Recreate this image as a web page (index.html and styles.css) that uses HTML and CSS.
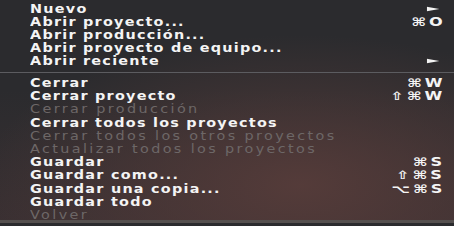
FILE: index.html
```html
<!DOCTYPE html>
<html lang="es">
<head>
    <meta charset="UTF-8">
    <title>Archivo</title>
    <link rel="stylesheet" href="styles.css">
</head>
<body>
    <div class="menu">
        <div class="group">
            <div class="item"><span class="label">Nuevo</span><span class="key"><svg class="arrow" viewBox="0 0 12 6"><polygon points="0,0 12,3 0,6"/></svg></span></div>
            <div class="item"><span class="label">Abrir proyecto...</span><span class="key">⌘O</span></div>
            <div class="item"><span class="label">Abrir producción...</span></div>
            <div class="item"><span class="label">Abrir proyecto de equipo...</span></div>
            <div class="item"><span class="label">Abrir reciente</span><span class="key"><svg class="arrow" viewBox="0 0 12 6"><polygon points="0,0 12,3 0,6"/></svg></span></div>
        </div>
        <div class="sep"></div>
        <div class="group">
            <div class="item"><span class="label">Cerrar</span><span class="key">⌘W</span></div>
            <div class="item"><span class="label">Cerrar proyecto</span><span class="key">⇧⌘W</span></div>
            <div class="item off"><span class="label">Cerrar producción</span></div>
            <div class="item"><span class="label">Cerrar todos los proyectos</span></div>
            <div class="item off"><span class="label">Cerrar todos los otros proyectos</span></div>
            <div class="item off"><span class="label">Actualizar todos los proyectos</span></div>
            <div class="item"><span class="label">Guardar</span><span class="key">⌘S</span></div>
            <div class="item"><span class="label">Guardar como...</span><span class="key">⇧⌘S</span></div>
            <div class="item"><span class="label">Guardar una copia...</span><span class="key">⌥⌘S</span></div>
            <div class="item"><span class="label">Guardar todo</span></div>
            <div class="item off"><span class="label">Volver</span></div>
        </div>
    </div>
</body>
</html>
```

FILE: styles.css
```css
/* Menu */
body {
    margin: 0;
    width: 454px;
    height: 226px;
    overflow: hidden;
    font-family: "DejaVu Sans", sans-serif;
    background-color: #2b2b2e;
}

.menu {
    height: 223px;
    padding-top: 2px;
    box-sizing: border-box;
    border-bottom: 3px solid #55504f;
    background:
        radial-gradient(ellipse 320px 150px at 300px 185px, rgba(86, 60, 58, 0.95), rgba(86, 60, 58, 0) 100%),
        linear-gradient(#2b2b2e 0, #2b2b2e 90px, #3a3032 226px);
}

.item {
    display: flex;
    justify-content: space-between;
    align-items: center;
    height: 13.2px;
    padding: 0 9px 0 30px;
    font-size: 11.5px;
    font-weight: bold;
    letter-spacing: 1px;
    color: #f4f4f4;
    white-space: nowrap;
}

/* source text is stretched wide */
.label {
    display: inline-block;
    transform: scaleX(1.25);
    transform-origin: left center;
}

.item.off {
    color: #6d6767;
    font-weight: normal;
    letter-spacing: 1.9px;
}

.key {
    display: flex;
    align-items: center;
    letter-spacing: 2px;
    transform: scaleX(1.4);
    transform-origin: right center;
}

.arrow {
    width: 9px;
    height: 6px;
    margin-right: 4px;
    fill: #f4f4f4;
}

.sep {
    height: 1px;
    margin: 4px 0 3.5px;
    background-color: #5c5c60;
}
```
